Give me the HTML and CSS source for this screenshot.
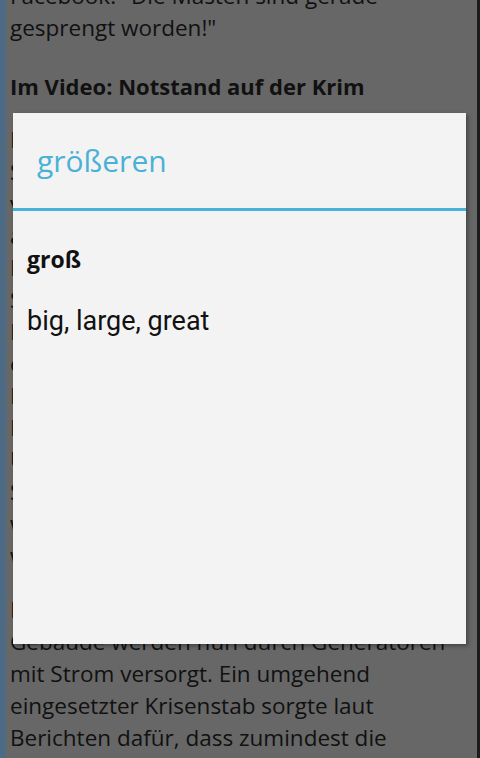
FILE: index.html
```html
<!DOCTYPE html>
<html lang="de">
<head>
<meta charset="utf-8">
<title>größeren</title>
<link rel="stylesheet" href="styles.css">
</head>
<body>
<div class="screen">
  <div class="edge"></div>
  <article class="article">
    <p>Facebook: "Die Masten sind gerade gesprengt worden!"</p>
    <h2>Im Video: Notstand auf der Krim</h2>
    <p>Die Krim ist nach Anschlägen auf mehrere Strommasten in der Ukraine fast vollständig von der Stromversorgung abgeschnitten. Der von Moskau eingesetzte Regierungschef Sergej Aksjonow rief am Sonntag den Notstand aus. Etwa zwei Millionen Menschen auf der Halbinsel sind ohne Strom. Unbekannte hatten in der Nacht zum Sonntag zwei Hochspannungsmasten im Süden der Ukraine gesprengt, über die die Krim mit Strom versorgt wird. Bereits am Freitag waren zwei andere Masten beschädigt worden.</p>
    <p>Krankenhäuser und andere wichtige Gebäude werden nun durch Generatoren mit Strom versorgt. Ein umgehend eingesetzter Krisenstab sorgte laut Berichten dafür, dass zumindest die Wasserversorgung gesichert ist.</p>
  </article>
  <div class="edge-right"></div>
  <div class="dialog">
    <div class="dialog-title">größeren</div>
    <div class="dialog-body">
      <div class="lemma">groß</div>
      <div class="meaning">big, large, great</div>
    </div>
  </div>
</div>
</body>
</html>
```

FILE: styles.css
```css
html, body {
  margin: 0;
  padding: 0;
}
body {
  width: 480px;
  height: 758px;
  overflow: hidden;
  background: #676767;
}
.screen {
  position: relative;
  width: 480px;
  height: 758px;
  overflow: hidden;
  display: flex;
  background: #676767;
}
.edge {
  flex: 0 0 6px;
  background: #4d6a84;
}
.edge-right {
  flex: 0 0 3px;
  background: #1c1c1c;
}
.article {
  flex: 1;
  padding: 0 7px 0 4px;
  margin-top: -20px;
  font-family: "Open Sans", sans-serif;
  font-size: 22.5px;
  line-height: 32px;
  color: #111;
}
.article p {
  margin: 0 0 22px;
}
.article h2 {
  font-size: 22px;
  font-weight: bold;
  line-height: 32px;
  margin: 26px 0 22px;
}
.dialog {
  position: absolute;
  left: 13px;
  top: 113px;
  width: 453px;
  height: 531px;
  background: #f3f3f3;
  box-shadow: 2px 2px 4px rgba(0,0,0,0.35);
  display: flex;
  flex-direction: column;
}
.dialog-title {
  height: 98px;
  box-sizing: border-box;
  padding: 28px 0 0 24px;
  font-family: "Open Sans", sans-serif;
  font-size: 30px;
  line-height: 40px;
  color: #4ab1d6;
  border-bottom: 3px solid #45b3da;
}
.dialog-body {
  padding: 34px 14px 0;
  font-family: Roboto, sans-serif;
  color: #111;
}
.lemma {
  font-family: "Open Sans", sans-serif;
  font-weight: bold;
  font-size: 23px;
  line-height: 28px;
}
.meaning {
  margin-top: 33px;
  font-size: 27px;
  line-height: 30px;
}
```
